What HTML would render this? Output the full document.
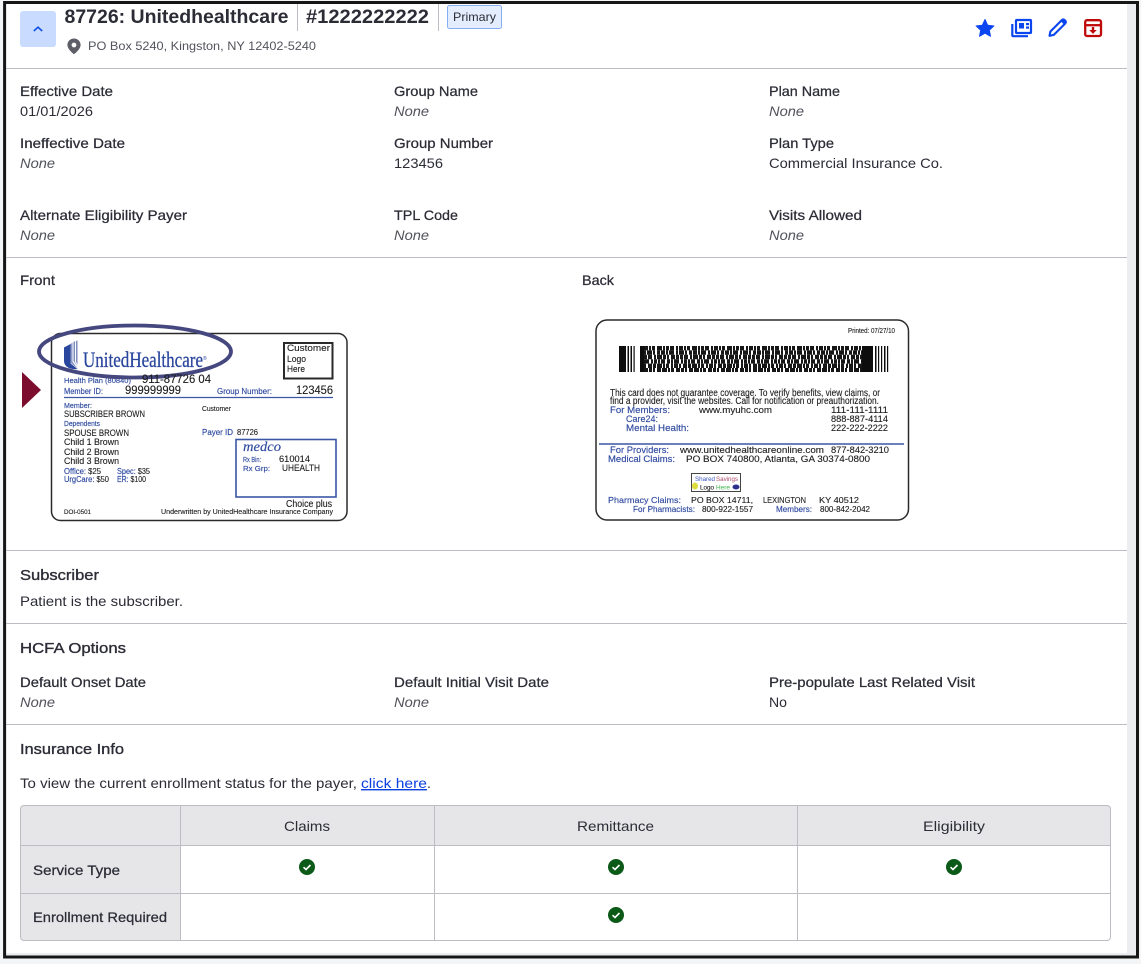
<!DOCTYPE html>
<html lang="en">
<head>
<meta charset="utf-8">
<title>87726: Unitedhealthcare</title>
<style>
html,body{margin:0;padding:0;background:#fff;width:1141px;height:964px;overflow:hidden}
svg{display:block}
text{font-family:"Liberation Sans",sans-serif;fill:#2b2c36;font-size:14px}
.l{paint-order:stroke;stroke:#2b2c36;stroke-width:.25px}
.h{paint-order:stroke;stroke:#2b2c36;stroke-width:.35px;font-size:15px}
.n{font-style:italic;fill:#52535c}
.d{fill:#2b2c36}
.rule{stroke:#bcbdc2;stroke-width:1}
.c text{fill:#1c1c1c;font-size:9.5px;stroke:#1c1c1c;stroke-width:.12px}
.c .b,.c tspan.b{fill:#2f4aa0;stroke:#2f4aa0;stroke-width:.15px}
</style>
</head>
<body>
<svg width="1141" height="964" viewBox="0 0 1141 964" xmlns="http://www.w3.org/2000/svg">
<defs><filter id="soft" x="-5%" y="-5%" width="110%" height="110%"><feGaussianBlur stdDeviation="0.38"/></filter></defs>
<rect x="0" y="0" width="1141" height="964" fill="#f4f5f6"/>
<rect x="5" y="3" width="1131" height="953" fill="#fff"/>
<rect x="1127" y="3" width="9" height="953" fill="#ecedf0"/>
<rect x="6" y="953" width="1130" height="3" fill="#ecedf0"/>
<rect x="4.600" y="2.500" width="1132.900" height="954.500" fill="none" stroke="#161616" stroke-width="3"/>

<!-- header -->
<rect x="20" y="11" width="36" height="36" rx="3" fill="#c9dcff"/>
<path d="M33.800 31l4.200-3.800 4.200 3.800" fill="none" stroke="#0b4fe8" stroke-width="1.600"/>
<text x="64.500" y="23" font-weight="700" style="font-size:19px" textLength="224" lengthAdjust="spacingAndGlyphs">87726: Unitedhealthcare</text>
<line x1="297.500" y1="4" x2="297.500" y2="31" class="rule"/>
<text x="306" y="23" font-weight="700" style="font-size:19px" textLength="123" lengthAdjust="spacingAndGlyphs">#1222222222</text>
<line x1="438.500" y1="4" x2="438.500" y2="31" class="rule"/>
<rect x="447.500" y="5.500" width="54" height="23" rx="2" fill="#e3edfd" stroke="#85adf2"/>
<text x="453" y="21" style="font-size:12px" textLength="43" lengthAdjust="spacingAndGlyphs">Primary</text>
<path d="M74 38.500c-3.700 0-6.600 2.900-6.600 6.500 0 4.400 6.600 9.200 6.600 9.200s6.600-4.800 6.600-9.200c0-3.600-2.900-6.500-6.600-6.500zm0 8.900a2.400 2.400 0 1 1 0-4.800 2.400 2.400 0 0 1 0 4.800z" fill="#5d5e67"/>
<text x="88" y="50" style="font-size:12px;fill:#53545d" textLength="228" lengthAdjust="spacingAndGlyphs">PO Box 5240, Kingston, NY 12402-5240</text>

<!-- header icons -->
<path d="M985 19.300l2.700 5.800 6.300.8-4.600 4.300 1.200 6.200-5.600-3.100-5.600 3.100 1.200-6.200-4.600-4.300 6.300-.8z" fill="#0b45f0" stroke="#0b45f0" stroke-width=".8" stroke-linejoin="round"/>
<g fill="none" stroke="#0b45f0" stroke-width="2.200">
<rect x="1016" y="20" width="15" height="13" rx=".8"/>
<path d="M1012.300 24v11.300a.9.9 0 0 0 .9.9H1028"/>
</g>
<rect x="1019" y="23" width="5" height="5.500" fill="#0b45f0"/>
<rect x="1026" y="23" width="3" height="2.200" fill="#0b45f0"/>
<rect x="1026" y="26.500" width="3" height="2.200" fill="#0b45f0"/>
<path d="M1049.500 35.800l.9-4.300 11.500-11.500a1.800 1.800 0 0 1 2.600 0l.8.8a1.800 1.800 0 0 1 0 2.600l-11.500 11.500z" fill="none" stroke="#0b45f0" stroke-width="2.100" stroke-linejoin="round"/>
<path d="M1060.500 21l2.700-2 3.500 3.300-2 3z" fill="#0b45f0"/>
<g fill="none" stroke="#c00a0a" stroke-width="2.300">
<rect x="1085.200" y="20.200" width="15.800" height="15.800" rx="1.800"/>
<path d="M1085 25.200h16"/>
</g>
<path d="M1091.800 27h2.400v3h2.600l-3.800 3.900-3.800-3.900h2.600z" fill="#c00a0a"/>

<line x1="6" y1="68.500" x2="1127" y2="68.500" class="rule"/>

<!-- details -->
<text x="20" y="96" class="l" textLength="93" lengthAdjust="spacingAndGlyphs">Effective Date</text>
<text x="20" y="116" class="d" textLength="73" lengthAdjust="spacingAndGlyphs">01/01/2026</text>
<text x="394" y="96" class="l" textLength="84" lengthAdjust="spacingAndGlyphs">Group Name</text>
<text x="394" y="116" class="n" textLength="35" lengthAdjust="spacingAndGlyphs">None</text>
<text x="769" y="96" class="l" textLength="71" lengthAdjust="spacingAndGlyphs">Plan Name</text>
<text x="769" y="116" class="n" textLength="35" lengthAdjust="spacingAndGlyphs">None</text>

<text x="20" y="148" class="l" textLength="105" lengthAdjust="spacingAndGlyphs">Ineffective Date</text>
<text x="20" y="168" class="n" textLength="35" lengthAdjust="spacingAndGlyphs">None</text>
<text x="394" y="148" class="l" textLength="99" lengthAdjust="spacingAndGlyphs">Group Number</text>
<text x="394" y="168" class="d" textLength="49" lengthAdjust="spacingAndGlyphs">123456</text>
<text x="769" y="148" class="l" textLength="65" lengthAdjust="spacingAndGlyphs">Plan Type</text>
<text x="769" y="168" class="d" textLength="174" lengthAdjust="spacingAndGlyphs">Commercial Insurance Co.</text>

<text x="20" y="220" class="l" textLength="167" lengthAdjust="spacingAndGlyphs">Alternate Eligibility Payer</text>
<text x="20" y="240" class="n" textLength="35" lengthAdjust="spacingAndGlyphs">None</text>
<text x="394" y="220" class="l" textLength="64" lengthAdjust="spacingAndGlyphs">TPL Code</text>
<text x="394" y="240" class="n" textLength="35" lengthAdjust="spacingAndGlyphs">None</text>
<text x="769" y="220" class="l" textLength="93" lengthAdjust="spacingAndGlyphs">Visits Allowed</text>
<text x="769" y="240" class="n" textLength="35" lengthAdjust="spacingAndGlyphs">None</text>

<line x1="6" y1="257.500" x2="1127" y2="257.500" class="rule"/>
<text x="20" y="285" class="l" textLength="35" lengthAdjust="spacingAndGlyphs">Front</text>
<text x="582" y="285" class="l" textLength="32" lengthAdjust="spacingAndGlyphs">Back</text>

<!-- front card -->
<g class="c" filter="url(#soft)">
<rect x="51.500" y="333.500" width="295.500" height="187" rx="9" fill="#fff" stroke="#2c2c2c" stroke-width="1.500"/>
<path d="M22 372l19 18-19 18z" fill="#7b0f2d"/>
<path d="M64 347.500l6.500-3.500v19.500l7 5.500c-8 .8-13.500-2.500-13.500-8z" fill="#2a469e"/>
<path d="M70.500 344l2-1.500v19l5 7-7-5.500z" fill="#8f9cc8"/>
<path d="M73.500 342l1.500-1v21l3 5-4.500-6z M76 341l1.500-.5v24l-1.500-2.500z" fill="#7f8dbf"/>
<text x="83" y="367" textLength="120" lengthAdjust="spacingAndGlyphs" style="font-family:'Liberation Serif',serif;font-size:22px;fill:#2a469e;stroke:#2a469e;stroke-width:.3px">UnitedHealthcare</text>
<text x="203" y="360" style="font-size:5px;fill:#2a469e;stroke:none">®</text>
<text x="64" y="383" class="b" style="font-size:7.500px" textLength="67" lengthAdjust="spacingAndGlyphs">Health Plan (80840)</text>
<ellipse cx="135" cy="351.500" rx="96" ry="26" fill="none" stroke="#45467f" stroke-width="3.800"/>
<rect x="284" y="343" width="48.500" height="35.500" fill="#fff" stroke="#2c2c2c" stroke-width="2"/>
<text x="287" y="351" style="font-size:9px" textLength="43" lengthAdjust="spacingAndGlyphs">Customer</text>
<text x="287" y="362" style="font-size:9px" textLength="19" lengthAdjust="spacingAndGlyphs">Logo</text>
<text x="287" y="372" style="font-size:9px" textLength="18" lengthAdjust="spacingAndGlyphs">Here</text>
<text x="142" y="383" style="font-size:12px" textLength="69" lengthAdjust="spacingAndGlyphs">911-87726 04</text>
<text x="64" y="394" class="b" style="font-size:8.500px" textLength="39" lengthAdjust="spacingAndGlyphs">Member ID:</text>
<text x="125" y="394" style="font-size:12px" textLength="56" lengthAdjust="spacingAndGlyphs">999999999</text>
<text x="217" y="394" class="b" style="font-size:8.500px" textLength="55" lengthAdjust="spacingAndGlyphs">Group Number:</text>
<text x="296" y="394" style="font-size:12px" textLength="37" lengthAdjust="spacingAndGlyphs">123456</text>
<line x1="64" y1="397.500" x2="333" y2="397.500" stroke="#3a57a5" stroke-width="1.300"/>
<text x="64" y="408" class="b" style="font-size:7.500px" textLength="28" lengthAdjust="spacingAndGlyphs">Member:</text>
<text x="64" y="417" style="font-size:9.500px" textLength="81" lengthAdjust="spacingAndGlyphs">SUBSCRIBER BROWN</text>
<text x="64" y="426" class="b" style="font-size:7.500px" textLength="36" lengthAdjust="spacingAndGlyphs">Dependents</text>
<text x="64" y="436" style="font-size:9.500px" textLength="65" lengthAdjust="spacingAndGlyphs">SPOUSE BROWN</text>
<text x="64" y="445" style="font-size:9.500px" textLength="55" lengthAdjust="spacingAndGlyphs">Child 1 Brown</text>
<text x="64" y="455" style="font-size:9.500px" textLength="55" lengthAdjust="spacingAndGlyphs">Child 2 Brown</text>
<text x="64" y="464" style="font-size:9.500px" textLength="55" lengthAdjust="spacingAndGlyphs">Child 3 Brown</text>
<text x="64" y="474" style="font-size:8px" textLength="37" lengthAdjust="spacingAndGlyphs"><tspan class="b">Office:</tspan> $25</text>
<text x="117" y="474" style="font-size:8px" textLength="33" lengthAdjust="spacingAndGlyphs"><tspan class="b">Spec:</tspan> $35</text>
<text x="64" y="482" style="font-size:8px" textLength="45" lengthAdjust="spacingAndGlyphs"><tspan class="b">UrgCare:</tspan> $50</text>
<text x="117" y="482" style="font-size:8px" textLength="29" lengthAdjust="spacingAndGlyphs"><tspan class="b">ER:</tspan> $100</text>
<text x="202" y="411" style="font-size:7.500px" textLength="29" lengthAdjust="spacingAndGlyphs">Customer</text>
<text x="202" y="435" class="b" style="font-size:8px" textLength="31" lengthAdjust="spacingAndGlyphs">Payer ID</text>
<text x="237" y="435" style="font-size:8px" textLength="21" lengthAdjust="spacingAndGlyphs">87726</text>
<rect x="236" y="439.500" width="100" height="57.500" fill="none" stroke="#3a57a5" stroke-width="1.600"/>
<text x="243" y="451" class="b" style="font-family:'Liberation Serif',serif;font-style:italic;font-size:14px" textLength="38" lengthAdjust="spacingAndGlyphs">medco</text>
<text x="243" y="462" class="b" style="font-size:7.500px" textLength="18" lengthAdjust="spacingAndGlyphs">Rx Bin:</text>
<text x="279" y="462" style="font-size:9.500px" textLength="31" lengthAdjust="spacingAndGlyphs">610014</text>
<text x="243" y="471" class="b" style="font-size:7.500px" textLength="27" lengthAdjust="spacingAndGlyphs">Rx Grp:</text>
<text x="282" y="471" style="font-size:9.500px" textLength="38" lengthAdjust="spacingAndGlyphs">UHEALTH</text>
<text x="286" y="507" style="font-size:10px" textLength="46" lengthAdjust="spacingAndGlyphs">Choice plus</text>
<text x="64" y="514" style="font-size:6.500px" textLength="27" lengthAdjust="spacingAndGlyphs">DOI-0501</text>
<text x="161" y="514" style="font-size:7.500px" textLength="172" lengthAdjust="spacingAndGlyphs">Underwritten by UnitedHealthcare Insurance Company</text>
</g>

<!-- back card -->
<g class="c" filter="url(#soft)">
<rect x="596" y="320" width="312.500" height="200" rx="11" fill="#fff" stroke="#2c2c2c" stroke-width="1.500"/>
<text x="848" y="333" style="font-size:7px" textLength="47" lengthAdjust="spacingAndGlyphs">Printed: 07/27/10</text>
<rect x="619" y="346" width="7" height="26" fill="#111"/>
<rect x="627.500" y="346" width="1.500" height="26" fill="#111"/>
<rect x="630.500" y="346" width="1.500" height="26" fill="#111"/>
<rect x="633.500" y="346" width="1.200" height="26" fill="#111"/>
<rect x="640" y="346" width="4" height="26" fill="#111"/>
<rect x="862" y="346" width="11" height="26" fill="#111"/>
<rect x="875" y="346" width="1.500" height="26" fill="#111"/>
<rect x="878" y="346" width="1.200" height="26" fill="#111"/>
<rect x="881" y="346" width="1.200" height="26" fill="#111"/>
<rect x="884" y="346" width="1.500" height="26" fill="#111"/>
<rect x="887" y="346" width="1.200" height="26" fill="#111"/>
<g fill="none" stroke="#161616">
<line x1="644" y1="348.200" x2="862" y2="348.200" stroke-width="4.400" stroke-dasharray="4 1 2 1 3 2 5 1 2 1 3 1 4 2 2 1"/>
<line x1="644" y1="352.600" x2="862" y2="352.600" stroke-width="4.400" stroke-dasharray="2 1 5 1 2 2 3 1 4 1 2 1 5 2"/>
<line x1="644" y1="357" x2="862" y2="357" stroke-width="4.400" stroke-dasharray="3 1 4 2 2 1 5 1 3 1 2 2 4 1 3 1"/>
<line x1="644" y1="361.400" x2="862" y2="361.400" stroke-width="4.400" stroke-dasharray="5 2 2 1 3 1 2 1 4 2 3 1 2 1"/>
<line x1="644" y1="365.800" x2="862" y2="365.800" stroke-width="4.400" stroke-dasharray="2 2 4 1 3 1 5 1 2 1 3 2 2 1 4 1"/>
<line x1="644" y1="370" x2="862" y2="370" stroke-width="4" stroke-dasharray="4 1 3 1 2 2 4 1 5 1 2 1 3 2"/>
</g>
<text x="610" y="396" style="font-size:10px" textLength="270" lengthAdjust="spacingAndGlyphs">This card does not guarantee coverage. To verify benefits, view claims, or</text>
<text x="610" y="404" style="font-size:10px" textLength="269" lengthAdjust="spacingAndGlyphs">find a provider, visit the websites. Call for notification or preauthorization.</text>
<text x="610" y="413" class="b" textLength="60" lengthAdjust="spacingAndGlyphs">For Members:</text>
<text x="699" y="413" textLength="73" lengthAdjust="spacingAndGlyphs">www.myuhc.com</text>
<text x="831" y="413" textLength="57" lengthAdjust="spacingAndGlyphs">111-111-1111</text>
<text x="626" y="422" class="b" textLength="32" lengthAdjust="spacingAndGlyphs">Care24:</text>
<text x="831" y="422" textLength="57" lengthAdjust="spacingAndGlyphs">888-887-4114</text>
<text x="626" y="431" class="b" textLength="63" lengthAdjust="spacingAndGlyphs">Mental Health:</text>
<text x="831" y="431" textLength="57" lengthAdjust="spacingAndGlyphs">222-222-2222</text>
<line x1="599" y1="444" x2="904" y2="444" stroke="#3a57a5" stroke-width="1.400"/>
<text x="610" y="453" class="b" textLength="59" lengthAdjust="spacingAndGlyphs">For Providers:</text>
<text x="680" y="453" textLength="144" lengthAdjust="spacingAndGlyphs">www.unitedhealthcareonline.com</text>
<text x="831" y="453" textLength="58" lengthAdjust="spacingAndGlyphs">877-842-3210</text>
<text x="608" y="462" class="b" textLength="67" lengthAdjust="spacingAndGlyphs">Medical Claims:</text>
<text x="686" y="462" textLength="184" lengthAdjust="spacingAndGlyphs">PO BOX 740800, Atlanta, GA 30374-0800</text>
<rect x="691.500" y="473.500" width="49" height="18" fill="#fff" stroke="#444"/>
<text x="695" y="481" style="font-size:6.500px;fill:#3a57c5;stroke:none" textLength="20" lengthAdjust="spacingAndGlyphs">Shared</text>
<text x="716" y="481" style="font-size:6.500px;fill:#b04a6a;stroke:none" textLength="22" lengthAdjust="spacingAndGlyphs">Savings</text>
<text x="700" y="489.500" style="font-size:6.500px" textLength="14" lengthAdjust="spacingAndGlyphs">Logo</text>
<text x="716" y="489.500" style="font-size:6.500px;fill:#3fb24a;stroke:none" textLength="14" lengthAdjust="spacingAndGlyphs">Here</text>
<ellipse cx="695" cy="486" rx="3" ry="3.500" fill="#dcdc3c"/>
<ellipse cx="736" cy="487" rx="3.500" ry="2.500" fill="#2f2f8f"/>
<text x="608" y="503" class="b" style="font-size:8.500px" textLength="73" lengthAdjust="spacingAndGlyphs">Pharmacy Claims:</text>
<text x="691" y="503" style="font-size:8.500px" textLength="62" lengthAdjust="spacingAndGlyphs">PO BOX 14711,</text>
<text x="763" y="503" style="font-size:8.500px" textLength="43" lengthAdjust="spacingAndGlyphs">LEXINGTON</text>
<text x="819" y="503" style="font-size:8.500px" textLength="40" lengthAdjust="spacingAndGlyphs">KY 40512</text>
<text x="633" y="512" class="b" style="font-size:8.500px" textLength="62" lengthAdjust="spacingAndGlyphs">For Pharmacists:</text>
<text x="702" y="512" style="font-size:8.500px" textLength="51" lengthAdjust="spacingAndGlyphs">800-922-1557</text>
<text x="776" y="512" class="b" style="font-size:8.500px" textLength="36" lengthAdjust="spacingAndGlyphs">Members:</text>
<text x="820" y="512" style="font-size:8.500px" textLength="50" lengthAdjust="spacingAndGlyphs">800-842-2042</text>
</g>

<line x1="6" y1="550.500" x2="1127" y2="550.500" class="rule"/>
<text x="20" y="580" class="h" textLength="79" lengthAdjust="spacingAndGlyphs">Subscriber</text>
<text x="20" y="606" class="d" textLength="163" lengthAdjust="spacingAndGlyphs">Patient is the subscriber.</text>

<line x1="6" y1="623.500" x2="1127" y2="623.500" class="rule"/>
<text x="20" y="653" class="h" textLength="106" lengthAdjust="spacingAndGlyphs">HCFA Options</text>
<text x="20" y="687" class="l" textLength="126" lengthAdjust="spacingAndGlyphs">Default Onset Date</text>
<text x="20" y="707" class="n" textLength="35" lengthAdjust="spacingAndGlyphs">None</text>
<text x="394" y="687" class="l" textLength="155" lengthAdjust="spacingAndGlyphs">Default Initial Visit Date</text>
<text x="394" y="707" class="n" textLength="35" lengthAdjust="spacingAndGlyphs">None</text>
<text x="769" y="687" class="l" textLength="206" lengthAdjust="spacingAndGlyphs">Pre-populate Last Related Visit</text>
<text x="769" y="707" class="d" textLength="18" lengthAdjust="spacingAndGlyphs">No</text>

<line x1="6" y1="724.500" x2="1127" y2="724.500" class="rule"/>
<text x="20" y="754" class="h" textLength="104" lengthAdjust="spacingAndGlyphs">Insurance Info</text>
<text x="20" y="788" class="d" textLength="337" lengthAdjust="spacingAndGlyphs">To view the current enrollment status for the payer,</text>
<text x="361" y="788" style="fill:#0a3fe0;text-decoration:underline" textLength="66" lengthAdjust="spacingAndGlyphs">click here</text>
<text x="427" y="788" class="d">.</text>

<!-- table -->
<path d="M21 845.500V809a3.500 3.500 0 0 1 3.500-3.500h1083a3.500 3.500 0 0 1 3.500 3.500v36.500z" fill="#e6e6e9"/>
<path d="M20.500 845.500h160.500v95H24a3.500 3.500 0 0 1-3.500-3.500z" fill="#e6e6e9"/>
<rect x="20.500" y="805.500" width="1090" height="135" rx="3.500" fill="none" stroke="#bcbdc2"/>
<g class="rule">
<line x1="20.500" y1="845.500" x2="1110.500" y2="845.500"/>
<line x1="20.500" y1="893.500" x2="1110.500" y2="893.500"/>
<line x1="180.500" y1="805.500" x2="180.500" y2="940.500"/>
<line x1="434.500" y1="805.500" x2="434.500" y2="940.500"/>
<line x1="797.500" y1="805.500" x2="797.500" y2="940.500"/>
</g>
<text x="284" y="831" class="d" textLength="46" lengthAdjust="spacingAndGlyphs">Claims</text>
<text x="577" y="831" class="d" textLength="77" lengthAdjust="spacingAndGlyphs">Remittance</text>
<text x="923" y="831" class="d" textLength="62" lengthAdjust="spacingAndGlyphs">Eligibility</text>
<text x="33" y="875" class="l" textLength="87" lengthAdjust="spacingAndGlyphs">Service Type</text>
<text x="33" y="922" class="l" textLength="134" lengthAdjust="spacingAndGlyphs">Enrollment Required</text>
<g fill="#0b5a17">
<circle cx="307" cy="867" r="8"/>
<circle cx="616" cy="867" r="8"/>
<circle cx="954" cy="867" r="8"/>
<circle cx="616" cy="915" r="8"/>
</g>
<g fill="none" stroke="#fff" stroke-width="1.600">
<path d="M303.500 867.200l2.500 2.300 4.500-4.500"/>
<path d="M612.500 867.200l2.500 2.300 4.500-4.500"/>
<path d="M950.500 867.200l2.500 2.300 4.500-4.500"/>
<path d="M612.500 915.200l2.500 2.300 4.500-4.500"/>
</g>
</svg>
</body>
</html>
